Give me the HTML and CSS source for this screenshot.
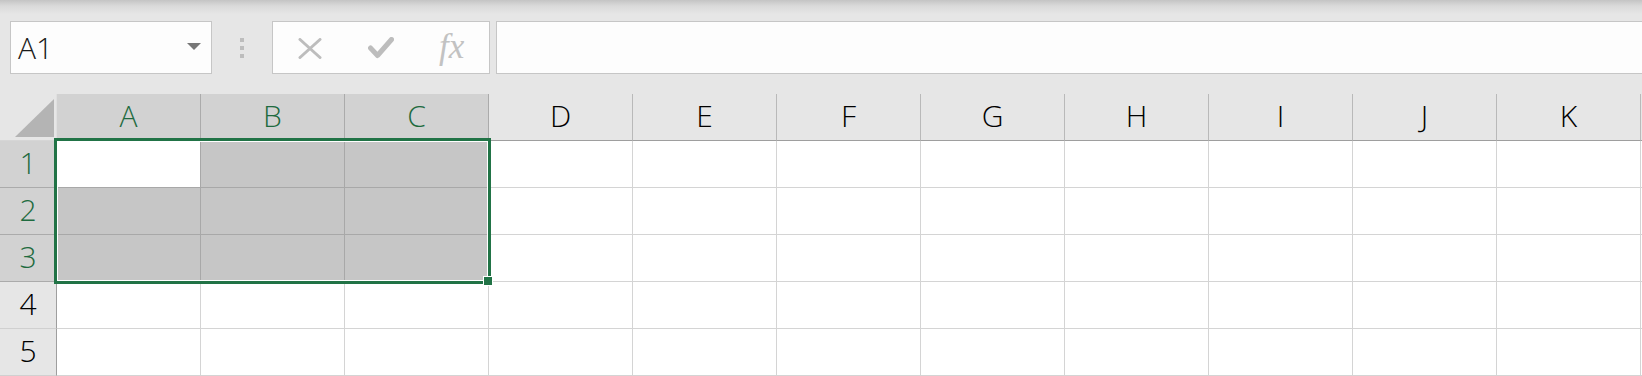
FILE: index.html
```html
<!DOCTYPE html>
<html lang="ja">
<head>
<meta charset="utf-8">
<title>Sheet</title>
<link rel="stylesheet" href="styles.css">
</head>
<body>
<div class="toolbar">
  <div class="namebox">
    <span class="namebox-text">A1</span>
    <span class="namebox-caret"></span>
  </div>
  <div class="grip"><span></span><span></span><span></span></div>
  <div class="fxbox">
    <svg class="ico-x" width="24" height="21" viewBox="0 0 24 21"><path d="M2 1.5 L22 19.5 M22 1.5 L2 19.5" stroke="#bdbdbd" stroke-width="3" fill="none" stroke-linecap="round"/></svg>
    <svg class="ico-ok" width="26" height="22" viewBox="0 0 26 22"><path d="M2.5 11 L9.5 18.5 L23.5 2.5" stroke="#bdbdbd" stroke-width="5" fill="none" stroke-linecap="round" stroke-linejoin="round"/></svg>
    <span class="ico-fx">fx</span>
  </div>
  <div class="formula"></div>
</div>

<div class="sheet">
  <div class="corner"><span class="corner-tri"></span></div>
  <div class="ch sel">A</div>
  <div class="ch sel">B</div>
  <div class="ch sel">C</div>
  <div class="ch">D</div>
  <div class="ch">E</div>
  <div class="ch">F</div>
  <div class="ch">G</div>
  <div class="ch">H</div>
  <div class="ch">I</div>
  <div class="ch">J</div>
  <div class="ch">K</div>
  <div class="ch ch-end"></div>

  <div class="rh sel">1</div>
  <div class="c active"></div><div class="c s"></div><div class="c s"></div>
  <div class="c"></div><div class="c"></div><div class="c"></div><div class="c"></div><div class="c"></div><div class="c"></div><div class="c"></div><div class="c"></div><div class="c c-end"></div>

  <div class="rh sel">2</div>
  <div class="c s"></div><div class="c s"></div><div class="c s"></div>
  <div class="c"></div><div class="c"></div><div class="c"></div><div class="c"></div><div class="c"></div><div class="c"></div><div class="c"></div><div class="c"></div><div class="c c-end"></div>

  <div class="rh sel">3</div>
  <div class="c s"></div><div class="c s"></div><div class="c s"></div>
  <div class="c"></div><div class="c"></div><div class="c"></div><div class="c"></div><div class="c"></div><div class="c"></div><div class="c"></div><div class="c"></div><div class="c c-end"></div>

  <div class="rh">4</div>
  <div class="c"></div><div class="c"></div><div class="c"></div>
  <div class="c"></div><div class="c"></div><div class="c"></div><div class="c"></div><div class="c"></div><div class="c"></div><div class="c"></div><div class="c"></div><div class="c c-end"></div>

  <div class="rh">5</div>
  <div class="c"></div><div class="c"></div><div class="c"></div>
  <div class="c"></div><div class="c"></div><div class="c"></div><div class="c"></div><div class="c"></div><div class="c"></div><div class="c"></div><div class="c"></div><div class="c c-end"></div>

  <div class="selection"></div>
  <div class="fill-handle"></div>
</div>
</body>
</html>
```
FILE: styles.css
```css
* { box-sizing: border-box; }
html, body {
  margin: 0;
  padding: 0;
  width: 1642px;
  height: 376px;
  overflow: hidden;
  background: #e6e6e6;
  font-family: "Open Sans", "Noto Sans", "Noto Sans CJK JP", sans-serif;
  font-weight: 350;
}

.toolbar {
  height: 94px;
  display: flex;
  align-items: flex-start;
  padding: 21px 0 0 10px;
  background: linear-gradient(to bottom, #c4c4c4 0px, #dadada 6px, #e6e6e6 14px, #e6e6e6 100%);
}

.namebox {
  width: 202px;
  height: 53px;
  background: #fdfdfd;
  border: 1px solid #c6c6c6;
  display: flex;
  align-items: center;
  justify-content: space-between;
  padding: 0 10px 0 7px;
}
.namebox-text {
  font-size: 30px;
  color: #1a1a1a;
  line-height: 1;
  margin-top: 1px;
}
.namebox-caret {
  width: 0;
  height: 0;
  border-left: 7px solid transparent;
  border-right: 7px solid transparent;
  border-top: 7px solid #777;
  margin-top: -3px;
}

.grip {
  margin: 17px 0 0 28px;
  display: flex;
  flex-direction: column;
  gap: 4px;
}
.grip span {
  display: block;
  width: 4px;
  height: 4px;
  background: #bdbdbd;
}

.fxbox {
  margin-left: 28px;
  width: 218px;
  height: 53px;
  background: #fdfdfd;
  border: 1px solid #c6c6c6;
  display: flex;
  align-items: center;
}
.ico-x { margin-left: 25px; margin-top: 2px; }
.ico-ok { margin-left: 46px; margin-top: 0; }
.ico-fx {
  margin-left: 45px;
  font-family: "Liberation Serif", "DejaVu Serif", serif;
  font-weight: 400;
  font-style: italic;
  font-size: 35px;
  line-height: 1;
  color: #c2c2c2;
  margin-top: -2px;
}

.formula {
  margin-left: 6px;
  flex: 1;
  margin-right: -10px;
  height: 53px;
  background: #fdfdfd;
  border: 1px solid #c6c6c6;
}

.sheet {
  position: relative;
  display: grid;
  grid-template-columns: 57px repeat(11, 144px) 1fr;
  grid-template-rows: repeat(6, 47px);
  background: #fff;
}

.corner {
  background: #e6e6e6;
  border-right: 1px solid #e0e0e0;
  border-bottom: 1px solid #d6d6d6;
  display: flex;
  align-items: flex-end;
  justify-content: flex-end;
  padding: 0 2px 3px 0;
}
.corner-tri {
  display: block;
  width: 39px;
  height: 38px;
  background: #b4b4b4;
  clip-path: polygon(100% 0, 100% 100%, 0 100%);
}

.ch, .rh {
  display: flex;
  align-items: center;
  justify-content: center;
  font-size: 30px;
  line-height: 1;
  color: #000;
  padding-bottom: 2px;
}
.ch {
  background: #e6e6e6;
  border-right: 1px solid #b9b9b9;
  border-bottom: 1px solid #9e9e9e;
}
.ch.sel {
  background: #d2d2d2;
  border-right-color: #ababab;
  color: #1e6b3f;
}
.ch-end { border-right: none; }

.rh {
  background: #e6e6e6;
  border-right: 1px solid #9e9e9e;
  border-bottom: 1px solid #d0d0d0;
}
.rh.sel {
  background: #d2d2d2;
  border-bottom-color: #ababab;
  color: #1e6b3f;
}

.c {
  background: #fff;
  border-right: 1px solid #d4d4d4;
  border-bottom: 1px solid #d4d4d4;
}
.c-end { border-right: none; }
.c.s {
  background: #c6c6c6;
  border-right-color: #a8a8a8;
  border-bottom-color: #a8a8a8;
}
.c.active {
  background: #fff;
  border-right-color: #a8a8a8;
  border-bottom-color: #a8a8a8;
}

.selection {
  position: absolute;
  left: 54px;
  top: 44px;
  width: 437px;
  height: 146px;
  border: 3px solid #217346;
  box-shadow: inset 0 0 0 1px #fff;
  pointer-events: none;
}
.fill-handle {
  position: absolute;
  left: 483px;
  top: 182px;
  width: 10px;
  height: 10px;
  background: #217346;
  border: 1px solid #fff;
}
```
